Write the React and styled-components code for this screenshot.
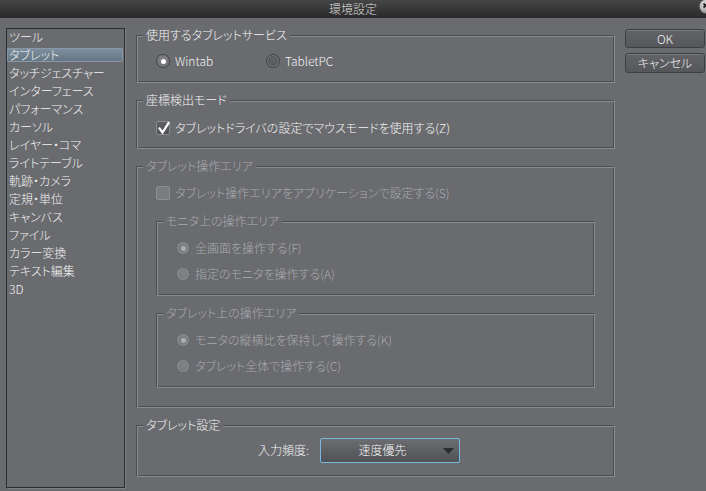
import React from "react";
import styled, { createGlobalStyle, css } from "styled-components";

const BG = "#6a6b6f";
const DARK = "#4c4d51";
const LIGHT = "#8c8d91";
const TEXT = "#f4f4f4";
const DIM = "#a9aaae";

const GlobalStyle = createGlobalStyle`
  html, body { margin: 0; padding: 0; background: ${BG}; }
  body {
    font-family: "Noto Sans CJK JP", "Liberation Sans", sans-serif;
    font-size: 12px;
    font-weight: 300;
    font-feature-settings: "palt";
    color: ${TEXT};
  }
  * { box-sizing: border-box; }
`;

const Window = styled.div`
  width: 706px;
  height: 491px;
  overflow: hidden;
  background: ${BG};
  display: flex;
  flex-direction: column;
`;

const TitleBar = styled.div`
  position: relative;
  height: 18px;
  flex: none;
  background: linear-gradient(#454545, #2b2b2b);
  border-bottom: 1px solid #2a2a2a;
  display: flex;
  align-items: center;
  justify-content: center;
`;

const Title = styled.span`
  color: #dcdcdc;
  font-size: 12px;
  line-height: 14px;
`;

const CloseIcon = styled.svg`
  position: absolute;
  right: -8px;
  top: -1px;
`;

const Body = styled.div`
  flex: 1;
  display: flex;
  align-items: flex-start;
  padding: 10px 0 0 6px;
`;

const CategoryList = styled.ul`
  list-style: none;
  margin: 0;
  padding: 0;
  width: 119px;
  height: 460px;
  flex: none;
  border: 1px solid #2c2d31;
  box-shadow: 1px 1px 0 #7d7e82;
  background: ${BG};
`;

const CategoryItem = styled.li`
  height: 14px;
  margin: 1px 1px 4px 0;
  padding-left: 2px;
  line-height: 14px;
  white-space: nowrap;
  color: ${TEXT};
  border-radius: 2px;
  ${(p) =>
    p.$selected &&
    css`
      background: linear-gradient(#7f91a0, #627382);
      box-shadow: inset 0 0 0 1px #8799a7;
    `}
`;

const Main = styled.div`
  width: 479px;
  margin-left: 11px;
  padding-top: 7px;
  display: flex;
  flex-direction: column;
  gap: 17px;
  flex: none;
`;

const Group = styled.div`
  position: relative;
  border: 1px solid;
  border-color: ${DARK} ${LIGHT} ${LIGHT} ${DARK};
  box-shadow: inset 1px 1px 0 ${LIGHT}, inset -1px -1px 0 ${DARK};
  padding: ${(p) => p.$pad || "18px 19px 14px"};
  margin-top: ${(p) => p.$mt || "0px"};
  display: flex;
  flex-direction: column;
  gap: ${(p) => p.$gap || "0px"};
`;

const Legend = styled.span`
  position: absolute;
  top: -8px;
  left: 6px;
  padding: 0 3px;
  background: ${BG};
  line-height: 14px;
  white-space: nowrap;
  color: ${(p) => (p.$disabled ? DIM : TEXT)};
`;

const OptionRow = styled.div`
  display: flex;
  align-items: center;
  height: 14px;
`;

const Option = styled.label`
  display: flex;
  align-items: center;
  gap: 5px;
  height: 14px;
  min-width: ${(p) => p.$width || "auto"};
  line-height: 14px;
  white-space: nowrap;
  color: ${(p) => (p.$disabled ? DIM : TEXT)};
`;

const RadioCircle = styled.span`
  position: relative;
  width: 14px;
  height: 14px;
  flex: none;
  border-radius: 50%;
  border: 1px solid ${(p) => (p.$disabled ? "#67686c" : "#404145")};
  background: ${(p) =>
    p.$disabled
      ? "radial-gradient(circle at 50% 40%, #828387, #75767a)"
      : p.$checked
      ? "radial-gradient(circle at 50% 40%, #85868a, #6a6b6f)"
      : "radial-gradient(circle at 50% 40%, #626367, #4f5054)"};
  box-shadow: inset 0 0 0 1px ${(p) => (p.$disabled ? "#8e8f93" : "#7c7d81")};
  ${(p) =>
    p.$checked &&
    css`
      &::after {
        content: "";
        position: absolute;
        left: 3.5px;
        top: 3.5px;
        width: 5px;
        height: 5px;
        border-radius: 50%;
        background: ${p.$disabled ? "#acadb1" : "#ffffff"};
      }
    `}
`;

const CheckBox = styled.span`
  position: relative;
  width: 14px;
  height: 14px;
  flex: none;
  border-radius: 2px;
  border: 1px solid ${(p) => (p.$disabled ? "#8e8f93" : "#8a8b8f")};
  background: ${(p) =>
    p.$disabled ? "#7b7c80" : "linear-gradient(#5e5f63, #4f5054)"};
`;

const CheckMark = styled.svg`
  position: absolute;
  left: 0px;
  top: -1px;
`;

const Radio = ({ label, checked, disabled, width }) => (
  <Option $disabled={disabled} $width={width}>
    <RadioCircle $checked={checked} $disabled={disabled} />
    {label}
  </Option>
);

const Check = ({ label, checked, disabled }) => (
  <Option $disabled={disabled}>
    <CheckBox $disabled={disabled}>
      {checked && (
        <CheckMark width="14" height="14" viewBox="0 0 14 14">
          <path
            d="M2.5 7.5 L5.5 11.5 L11.5 2"
            fill="none"
            stroke="#ffffff"
            strokeWidth="2.2"
            strokeLinecap="square"
          />
        </CheckMark>
      )}
    </CheckBox>
    {label}
  </Option>
);

const SettingRow = styled.div`
  display: flex;
  align-items: center;
  height: 24px;
  gap: 11px;
`;

const SettingLabel = styled.span`
  width: 172px;
  text-align: right;
  white-space: nowrap;
  line-height: 14px;
  color: ${TEXT};
`;

const Dropdown = styled.div`
  position: relative;
  width: 140px;
  height: 25px;
  border: 1px solid #74b9e2;
  border-radius: 2px;
  background: linear-gradient(#6c6d71, #505155);
  display: flex;
  align-items: center;
  justify-content: center;
  padding-right: 15px;
  color: ${TEXT};
  line-height: 14px;
`;

const DropArrow = styled.svg`
  position: absolute;
  right: 5px;
  top: 9px;
`;

const ButtonColumn = styled.div`
  margin-left: 10px;
  margin-top: 1px;
  width: 80px;
  display: flex;
  flex-direction: column;
  gap: 5px;
  flex: none;
`;

const DialogButton = styled.button`
  height: ${(p) => p.$h || "19px"};
  width: 80px;
  padding: 0;
  border: 1px solid #3e3f43;
  border-radius: 3px;
  background: linear-gradient(#626367, #56575b);
  box-shadow: inset 0 1px 0 #77787c;
  color: ${TEXT};
  font: inherit;
  font-feature-settings: "palt";
  line-height: 14px;
`;

const categories = [
  "ツール",
  "タブレット",
  "タッチジェスチャー",
  "インターフェース",
  "パフォーマンス",
  "カーソル",
  "レイヤー・コマ",
  "ライトテーブル",
  "軌跡・カメラ",
  "定規・単位",
  "キャンバス",
  "ファイル",
  "カラー変換",
  "テキスト編集",
  "3D",
];

export default function App() {
  return (
    <>
      <GlobalStyle />
      <Window>
        <TitleBar>
          <Title>環境設定</Title>
          <CloseIcon width="15" height="15" viewBox="0 0 15 15">
            <defs>
              <radialGradient id="closeGrad" cx="40%" cy="35%" r="65%">
                <stop offset="0" stopColor="#ececec" />
                <stop offset="1" stopColor="#8e8e8e" />
              </radialGradient>
            </defs>
            <circle cx="7.5" cy="7.5" r="7" fill="url(#closeGrad)" />
            <path d="M4.5 4.5 L8.5 8.5 M8.5 4.5 L4.5 8.5" stroke="#1e1e1e" strokeWidth="1.8" />
          </CloseIcon>
        </TitleBar>
        <Body>
          <CategoryList>
            {categories.map((c) => (
              <CategoryItem key={c} $selected={c === "タブレット"}>
                {c}
              </CategoryItem>
            ))}
          </CategoryList>
          <Main>
            <Group $pad="18px 19px 14px">
              <Legend>使用するタブレットサービス</Legend>
              <OptionRow>
                <Radio label="Wintab" checked width="110px" />
                <Radio label="TabletPC" />
              </OptionRow>
            </Group>
            <Group $pad="20px 19px 13px">
              <Legend>座標検出モード</Legend>
              <OptionRow>
                <Check label="タブレットドライバの設定でマウスモードを使用する(Z)" checked />
              </OptionRow>
            </Group>
            <Group $pad="19px 19px 19px">
              <Legend $disabled>タブレット操作エリア</Legend>
              <OptionRow>
                <Check label="タブレット操作エリアをアプリケーションで設定する(S)" disabled />
              </OptionRow>
              <Group $pad="19px 19px 14px" $gap="12px" $mt="21px">
                <Legend $disabled>モニタ上の操作エリア</Legend>
                <OptionRow>
                  <Radio label="全画面を操作する(F)" checked disabled />
                </OptionRow>
                <OptionRow>
                  <Radio label="指定のモニタを操作する(A)" disabled />
                </OptionRow>
              </Group>
              <Group $pad="19px 19px 14px" $gap="12px" $mt="17px">
                <Legend $disabled>タブレット上の操作エリア</Legend>
                <OptionRow>
                  <Radio label="モニタの縦横比を保持して操作する(K)" checked disabled />
                </OptionRow>
                <OptionRow>
                  <Radio label="タブレット全体で操作する(C)" disabled />
                </OptionRow>
              </Group>
            </Group>
            <Group $pad="12px 19px 14px 0">
              <Legend>タブレット設定</Legend>
              <SettingRow>
                <SettingLabel>入力頻度:</SettingLabel>
                <Dropdown>
                  速度優先
                  <DropArrow width="11" height="6" viewBox="0 0 11 6">
                    <path d="M0 0 H11 L5.5 6 Z" fill="#2a2b2f" />
                  </DropArrow>
                </Dropdown>
              </SettingRow>
            </Group>
          </Main>
          <ButtonColumn>
            <DialogButton>OK</DialogButton>
            <DialogButton $h="20px">キャンセル</DialogButton>
          </ButtonColumn>
        </Body>
      </Window>
    </>
  );
}
